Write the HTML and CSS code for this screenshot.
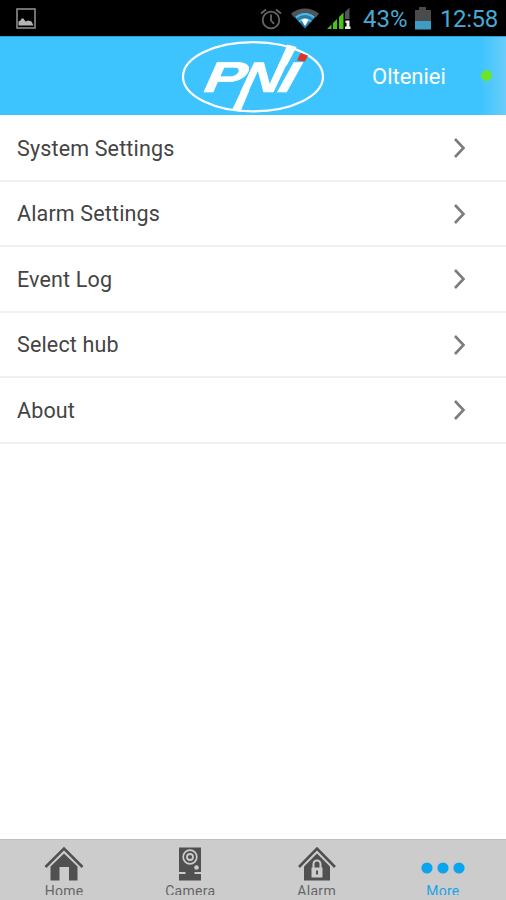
FILE: index.html
```html
<!DOCTYPE html>
<html lang="en">
<head>
  <meta charset="UTF-8">
  <meta name="viewport" content="width=device-width, initial-scale=1.0">
  <title>More</title>
  <link rel="stylesheet" href="styles.css">
</head>
<body>
  <div class="app">
    <div class="status">
      <svg class="status-pic" width="20" height="21" viewBox="0 0 20 21">
        <rect x="1" y="1" width="18" height="19" fill="none" stroke="#8c8c8c" stroke-width="1.6"/>
        <path d="M2.500 17.500v-4l2-1 1-2h2l2 3 3-1 3 1 2 4z" fill="#b4b4b4"/>
      </svg>
      <svg class="status-alarm" width="22" height="22" viewBox="0 0 22 22" fill="none" stroke="#666" stroke-width="1.8">
        <circle cx="11" cy="12" r="8.3"/>
        <path d="M11 6.500v6l3 3.500M1 5.500l5-4M21 5.500l-5-4"/>
      </svg>
      <svg class="status-wifi" width="28" height="21" viewBox="0 0 28 21">
        <path d="M0 5.500Q14-4.500 28 5.500L25 9.500Q14 1.500 3 9.500z" fill="#505457"/>
        <path d="M3.500 9Q14 .5 24.500 9L14 20.500z" fill="#2c7ba5"/>
        <path d="M5 9.500Q14 2.500 23 9.500M8 13.500Q14 8.500 20 13.500" fill="none" stroke="#53b9e3" stroke-width="2"/>
        <path d="M10.300 12Q14 9.500 17.700 12L14 18z" fill="#fff"/>
      </svg>
      <svg class="status-signal" width="24" height="23" viewBox="0 0 24 23">
        <path d="M0 22l4.500-4.500V22zM6 22v-6l4-4v10zM12 22V10l4.500-4.500V22z" fill="#48c414"/>
        <path d="M18 12V5l4.500-4.500V12z" fill="#555"/>
        <path d="M18.500 13.500H22.500V19.500H23.500V22H18V19.500H19.500V16H18.500z" fill="#eee"/>
      </svg>
      <span class="status-percent">43%</span>
      <svg class="status-battery" width="16" height="23" viewBox="0 0 16 23">
        <path d="M0 3h4V0h7v3h5v11H0z" fill="#4b4b4b"/>
        <path d="M0 14h16v8.500H0z" fill="#3f9cc4"/>
      </svg>
      <span class="status-time">12:58</span>
    </div>

    <div class="header">
      <svg class="logo" width="142" height="72" viewBox="0 0 142 72">
        <ellipse cx="71" cy="35.800" rx="70" ry="34.600" fill="none" stroke="#fff" stroke-width="2.200"/>
        <g class="logo-text">
          <text transform="translate(18 50.700) skewX(-24)" textLength="41" lengthAdjust="spacingAndGlyphs">P</text>
          <text transform="translate(55 50.700) skewX(-25)" textLength="40" lengthAdjust="spacingAndGlyphs">N</text>
          <text transform="translate(91.500 50.700) skewX(-29)" textLength="17" lengthAdjust="spacingAndGlyphs">I</text>
        </g>
        <!-- strokes of the N that run out to the ring -->
        <path d="M59.500 49L50 69L58.500 70.500L67.500 49z" fill="#fff"/>
        <path d="M96 25L105.500 3.500L114.500 6L104.500 25z" fill="#fff"/>
        <path d="M118.500 12l7.500 2.500-3 6-8-1z" fill="#dc3528"/>
      </svg>
      <span class="hub">Olteniei</span>
      <i class="online"></i>
    </div>

    <ul class="list">
      <li>System Settings<svg class="arrow" width="13" height="22" viewBox="0 0 13 22"><path d="M2 2l8.500 9L2 20"/></svg></li>
      <li>Alarm Settings<svg class="arrow" width="13" height="22" viewBox="0 0 13 22"><path d="M2 2l8.500 9L2 20"/></svg></li>
      <li>Event Log<svg class="arrow" width="13" height="22" viewBox="0 0 13 22"><path d="M2 2l8.500 9L2 20"/></svg></li>
      <li>Select hub<svg class="arrow" width="13" height="22" viewBox="0 0 13 22"><path d="M2 2l8.500 9L2 20"/></svg></li>
      <li>About<svg class="arrow" width="13" height="22" viewBox="0 0 13 22"><path d="M2 2l8.500 9L2 20"/></svg></li>
    </ul>

    <div class="tabs">
      <div class="tab">
        <svg width="40" height="36" viewBox="0 0 40 36">
          <path d="M1.500 21L20 2.500L38.500 21" fill="none" stroke="#505050" stroke-width="2.600"/>
          <path d="M20 7.500L33.500 20.500V34.500H25V21H15.500V34.500H6.500V20.500z" fill="#505050"/>
        </svg>
        <span>Home</span>
      </div>
      <div class="tab">
        <svg width="40" height="36" viewBox="0 0 40 36">
          <path d="M9 1.500H31V26H24.500V28H31V34.500H9V28H15.500V26H9z" fill="#505050"/>
          <circle cx="20" cy="11" r="6.800" fill="none" stroke="#ccc" stroke-width="1.700"/>
          <circle cx="20" cy="11" r="3" fill="none" stroke="#ccc" stroke-width="1.800"/>
          <circle cx="26.500" cy="21.500" r="2.300" fill="#ccc"/>
        </svg>
        <span>Camera</span>
      </div>
      <div class="tab">
        <svg width="40" height="36" viewBox="0 0 40 36">
          <path d="M2 21L20 2.500L38 21" fill="none" stroke="#505050" stroke-width="2.600"/>
          <path d="M20 7.500L33 20.500V34.500H7V20.500z" fill="#505050"/>
          <path d="M16.500 22v-4a3.500 3.500 0 0 1 7 0v4" fill="none" stroke="#ccc" stroke-width="2"/>
          <rect x="14.500" y="21.500" width="11" height="10" fill="#ccc"/>
          <path d="M20 24.500v4" stroke="#505050" stroke-width="2"/>
        </svg>
        <span>Alarm</span>
      </div>
      <div class="tab active">
        <svg width="44" height="36" viewBox="0 0 44 36" fill="#0ba4ee">
          <circle cx="6" cy="22" r="5.600"/>
          <circle cx="22" cy="22" r="5.600"/>
          <circle cx="38" cy="22" r="5.600"/>
        </svg>
        <span>More</span>
      </div>
    </div>
  </div>
</body>
</html>
```

FILE: styles.css
```css
* {
  box-sizing: border-box;
}
body {
  margin: 0;
  font-family: Roboto, "Liberation Sans", sans-serif;
}
svg {
  display: block;
  flex: none;
}
.app {
  display: flex;
  flex-direction: column;
  width: 506px;
  height: 900px;
  background-color: #fff;
  overflow: hidden;
}
.status {
  display: flex;
  align-items: center;
  flex: none;
  height: 36px;
  padding: 1px 8px 0 16px;
  background-color: #000;
  color: #48a9d4;
  font-size: 24px;
  white-space: nowrap;
}
.status-alarm {
  margin-left: auto;
}
.status-wifi {
  margin-left: 9px;
}
.status-signal {
  margin-left: 8px;
}
.status-percent {
  width: 46px;
  margin-left: 12px;
}
.status-battery {
  margin-left: 6px;
}
.status-time {
  width: 58px;
  margin-left: 9px;
  letter-spacing: -0.4px;
}
.header {
  display: flex;
  align-items: center;
  flex: none;
  height: 79px;
  padding: 0 14px 0 182px;
  border-top: 1px solid #2f9fd2;
  background: linear-gradient(90deg, #3dc4ff 480px, #6accfb 506px);
  color: #fff;
}
.logo {
  margin-top: 2px;
}
.logo-text {
  fill: #fff;
  stroke: #fff;
  stroke-width: 0.6;
  font: bold 43px "Liberation Sans", sans-serif;
}
.hub {
  margin-left: 48px;
  font-size: 22px;
}
.online {
  width: 11px;
  height: 11px;
  margin: -2px 0 0 auto;
  border-radius: 50%;
  background-color: #6be52c;
}
.list {
  flex: 1;
  margin: 0;
  padding: 1px 0 0;
  list-style: none;
}
.list li {
  display: flex;
  align-items: center;
  justify-content: space-between;
  height: 65.5px;
  padding: 1px 40px 0 17px;
  border-bottom: 2px solid #f0f0f0;
  color: #444;
  font-size: 21.5px;
  letter-spacing: 0.15px;
}
.arrow {
  fill: none;
  stroke: #7c7c7c;
  stroke-width: 2.6;
}
.tabs {
  display: flex;
  flex: none;
  height: 61px;
  padding: 0 0 5px 1px;
  border-top: 1px solid #c0c0c0;
  background-color: #ccc;
}
.tab {
  display: flex;
  flex: 1;
  flex-direction: column;
  align-items: center;
  padding-top: 6px;
  overflow: hidden;
  color: #666;
  font-size: 14px;
  line-height: 19px;
  letter-spacing: 0.3px;
}
.active {
  color: #1ba3e6;
}
```
